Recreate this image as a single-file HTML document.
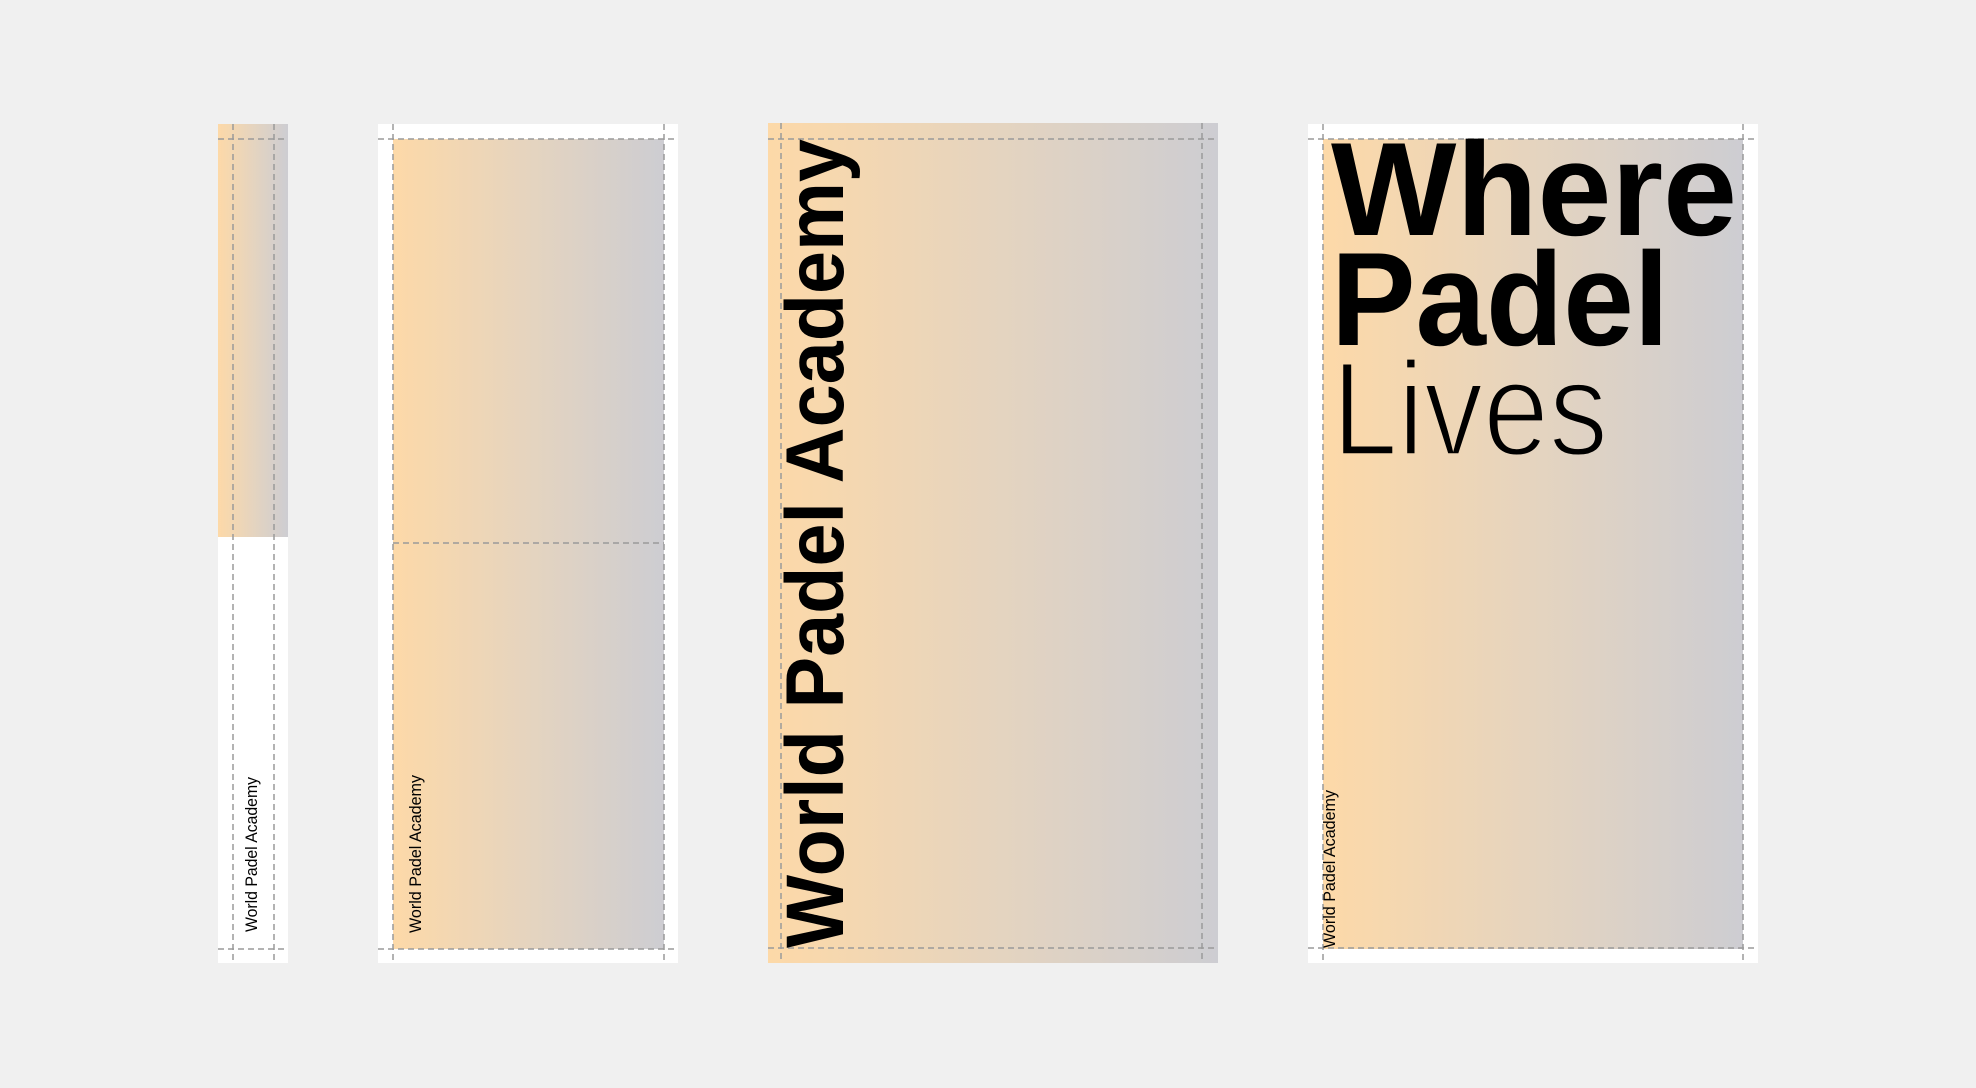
<!DOCTYPE html>
<html><head><meta charset="utf-8"><style>
html,body{margin:0;padding:0;background:#f0f0f0;}
svg{display:block}
text{font-family:"Liberation Sans",Arial,sans-serif;fill:#000}
</style></head><body>
<svg width="1976" height="1088" viewBox="0 0 1976 1088" xmlns="http://www.w3.org/2000/svg">
<defs>
<linearGradient id="g" x1="0" y1="0" x2="1" y2="0">
<stop offset="0" stop-color="#fdd9a8"/>
<stop offset="0.5" stop-color="#e5d4bf"/>
<stop offset="1" stop-color="#cdcdd2"/>
</linearGradient>
<linearGradient id="g4" gradientUnits="userSpaceOnUse" x1="1323" y1="0" x2="1743" y2="0">
<stop offset="0" stop-color="#fdd9a8"/>
<stop offset="0.5" stop-color="#e5d4bf"/>
<stop offset="1" stop-color="#cdcdd2"/>
</linearGradient>
</defs>
<rect width="1976" height="1088" fill="#f0f0f0"/>

<rect x="218" y="124" width="70" height="839" fill="#fff"/>
<rect x="218" y="124" width="70" height="413" fill="url(#g)"/>
<rect x="378" y="124" width="300" height="839" fill="#fff"/>
<rect x="393" y="139" width="271" height="810" fill="url(#g)"/>
<rect x="768" y="123" width="450" height="840" fill="url(#g)"/>
<rect x="1308" y="124" width="450" height="839" fill="#fff"/>
<rect x="1323" y="139" width="420" height="810" fill="url(#g4)"/>

<g stroke="#9a9a9a" stroke-width="1.5" stroke-dasharray="6 4" fill="none">
<line x1="233" y1="124" x2="233" y2="963"/><line x1="274" y1="124" x2="274" y2="963"/>
<line x1="218" y1="139" x2="288" y2="139"/><line x1="218" y1="949" x2="288" y2="949"/>
<line x1="393" y1="124" x2="393" y2="963"/><line x1="664" y1="124" x2="664" y2="963"/>
<line x1="378" y1="139" x2="678" y2="139"/><line x1="378" y1="949" x2="678" y2="949"/>
<line x1="393" y1="543" x2="664" y2="543"/>
<line x1="781" y1="123" x2="781" y2="963"/><line x1="1202" y1="123" x2="1202" y2="963"/>
<line x1="768" y1="139" x2="1218" y2="139"/><line x1="768" y1="948" x2="1218" y2="948"/>
<line x1="1323" y1="124" x2="1323" y2="963"/><line x1="1743" y1="124" x2="1743" y2="963"/>
<line x1="1308" y1="139" x2="1758" y2="139"/><line x1="1308" y1="948" x2="1758" y2="948"/>
</g>

<text transform="translate(257,932) rotate(-90)" font-size="17" textLength="155" lengthAdjust="spacingAndGlyphs">World Padel Academy</text>
<text transform="translate(421,933) rotate(-90)" font-size="17" textLength="158" lengthAdjust="spacingAndGlyphs">World Padel Academy</text>
<text transform="translate(1335,948) rotate(-90)" font-size="17" textLength="158" lengthAdjust="spacingAndGlyphs">World Padel Academy</text>

<text transform="translate(843,948) rotate(-90)" font-size="82" font-weight="bold" textLength="809" lengthAdjust="spacingAndGlyphs">World Padel Academy</text>

<text x="1331" y="235" font-size="133" font-weight="bold" textLength="406" lengthAdjust="spacingAndGlyphs">Where</text>
<text x="1331" y="345" font-size="133" font-weight="bold" textLength="338" lengthAdjust="spacingAndGlyphs">Padel</text>
<text x="1332" y="455" font-size="134" textLength="276" lengthAdjust="spacingAndGlyphs" stroke="url(#g4)" stroke-width="3.5" paint-order="normal">Lives</text>
</svg>
</body></html>
